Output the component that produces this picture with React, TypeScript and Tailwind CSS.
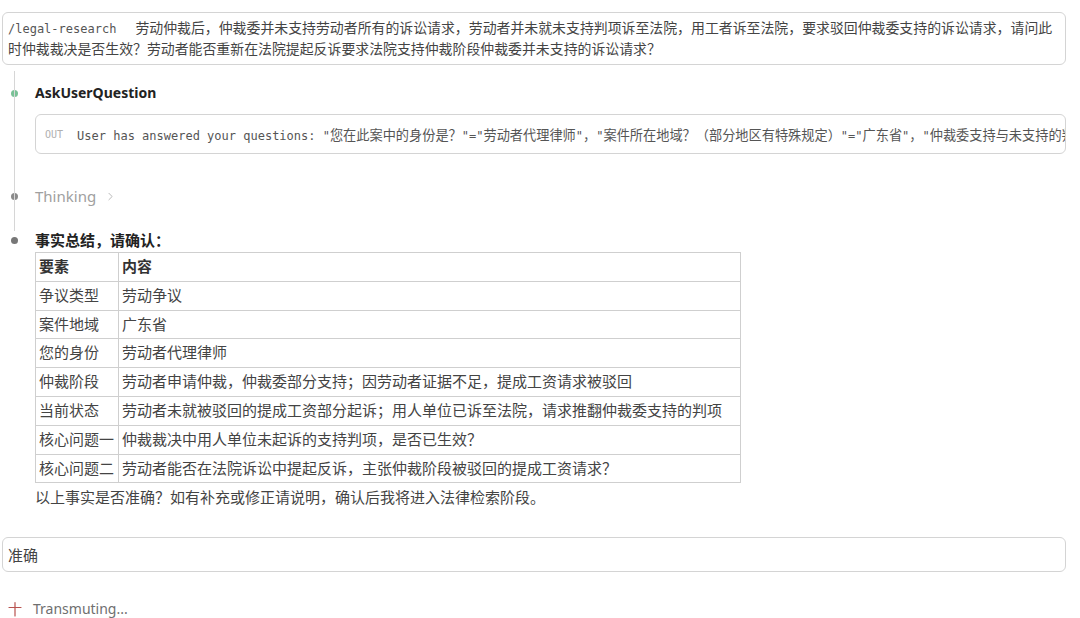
import { ChevronRight } from 'lucide-react'

const sans = 'font-["Noto_Sans","Noto_Sans_CJK_SC",sans-serif]'
const mono = 'font-["DejaVu_Sans_Mono","Noto_Sans_CJK_SC",monospace]'

const rows: [string, string][] = [
  ['争议类型', '劳动争议'],
  ['案件地域', '广东省'],
  ['您的身份', '劳动者代理律师'],
  ['仲裁阶段', '劳动者申请仲裁，仲裁委部分支持；因劳动者证据不足，提成工资请求被驳回'],
  ['当前状态', '劳动者未就被驳回的提成工资部分起诉；用人单位已诉至法院，请求推翻仲裁委支持的判项'],
  ['核心问题一', '仲裁裁决中用人单位未起诉的支持判项，是否已生效？'],
  ['核心问题二', '劳动者能否在法院诉讼中提起反诉，主张仲裁阶段被驳回的提成工资请求？'],
]

const outText =
  'User has answered your questions: "您在此案中的身份是？"="劳动者代理律师"，"案件所在地域？（部分地区有特殊规定）"="广东省"，"仲裁委支持与未支持的判项分别是什么？"="仲裁委部分支持"'

// ascii runs in mono 12px, cjk runs a bit larger like the original
function MixedMono({ text }: { text: string }) {
  const parts = text.match(/[\x00-\x7f]+|[^\x00-\x7f]+/g) ?? []
  return (
    <>
      {parts.map((p, i) =>
        /^[\x00-\x7f]/.test(p) ? (
          <span key={i} className={`${mono} text-[12px]`}>{p}</span>
        ) : (
          <span key={i} className="text-[13.2px]">{p}</span>
        )
      )}
    </>
  )
}

function Dot({ color }: { color: string }) {
  return (
    <div className="w-[33px] shrink-0 flex items-center h-[20px]">
      <div className={`ml-[9px] w-[7px] h-[7px] rounded-full ${color}`} />
    </div>
  )
}

export default function App() {
  return (
    <div className={`${sans} bg-white w-[1080px] h-[618px] overflow-hidden pl-[2px] pr-[14px] text-[#333]`}>
      {/* prompt */}
      <div className="mt-[12px] border border-[#d4d4d4] rounded-[6px] px-[5px] py-[5px] text-[13.9px] leading-[20px] text-[#444]">
        <div className="whitespace-nowrap">
          <span className={`${mono} text-[12px] text-[#555]`}>/legal-research</span>
          <span className="ml-[19px]">
            劳动仲裁后，仲裁委并未支持劳动者所有的诉讼请求，劳动者并未就未支持判项诉至法院，用工者诉至法院，要求驳回仲裁委支持的诉讼请求，请问此
          </span>
        </div>
        <div>时仲裁裁决是否生效？劳动者能否重新在法院提起反诉要求法院支持仲裁阶段仲裁委并未支持的诉讼请求？</div>
      </div>

      {/* timeline */}
      <div className="relative mt-[18px]">
        <div className="absolute left-[12px] top-[-12px] h-[160px] w-px bg-[#d6d6d6]" />

        <div className="flex">
          <Dot color="bg-[#79c196]" />
          <div className="text-[14px] leading-[20px] font-bold text-[#222]">AskUserQuestion</div>
        </div>
        <div className="ml-[33px] mt-[11px] h-[40px] border border-[#d4d4d4] rounded-[6px] flex items-center px-[9px] overflow-hidden whitespace-nowrap">
          <span className={`${mono} text-[10px] text-[#b0b0b0] mr-[14px]`}>OUT</span>
          <span className="text-[#555]">
            <MixedMono text={outText} />
          </span>
        </div>

        <div className="flex mt-[32px]">
          <Dot color="bg-[#8a8a8a]" />
          <div className="flex items-center gap-[6px] text-[15px] leading-[20px] text-[#a0a0a0]">
            Thinking
            <ChevronRight size={13} strokeWidth={1.5} className="text-[#aaa] ml-[2px]" />
          </div>
        </div>

        <div className="flex mt-[24px]">
          <Dot color="bg-[#777]" />
          <div className="text-[15px] leading-[20px] font-bold text-[#222]">事实总结，请确认：</div>
        </div>
      </div>

      {/* table */}
      <div className="ml-[33px] mt-[2px]">
        <table className="border-collapse text-[15px] leading-[19.8px] text-[#444]">
          <tbody>
            <tr>
              <td className="w-[83px] border border-[#cfcfcf] px-[3px] py-[4px] font-semibold text-[#333]">要素</td>
              <td className="w-[622px] border border-[#cfcfcf] px-[3px] py-[4px] font-semibold text-[#333]">内容</td>
            </tr>
            {rows.map(([k, v]) => (
              <tr key={k}>
                <td className="border border-[#cfcfcf] px-[3px] py-[4px] whitespace-nowrap">{k}</td>
                <td className="border border-[#cfcfcf] px-[3px] py-[4px] whitespace-nowrap">{v}</td>
              </tr>
            ))}
          </tbody>
        </table>
        <div className="mt-[4px] text-[15px] leading-[20px] text-[#444]">
          以上事实是否准确？如有补充或修正请说明，确认后我将进入法律检索阶段。
        </div>
      </div>

      {/* reply */}
      <div className="mt-[30px] h-[35px] border border-[#d4d4d4] rounded-[6px] flex items-center px-[5px] text-[15px] text-[#444]">
        准确
      </div>

      {/* status */}
      <div className="mt-[27px] flex items-center h-[20px]">
        <svg width="16" height="16" viewBox="0 0 16 16" className="ml-[5px]">
          <path d="M2 6.5H14M8 1.5V15" stroke="#b8524f" strokeWidth="1.2" fill="none" strokeLinecap="round" />
        </svg>
        <span className="ml-[10px] text-[14px] leading-[18px] text-[#6f6f6f]">Transmuting...</span>
      </div>
    </div>
  )
}
